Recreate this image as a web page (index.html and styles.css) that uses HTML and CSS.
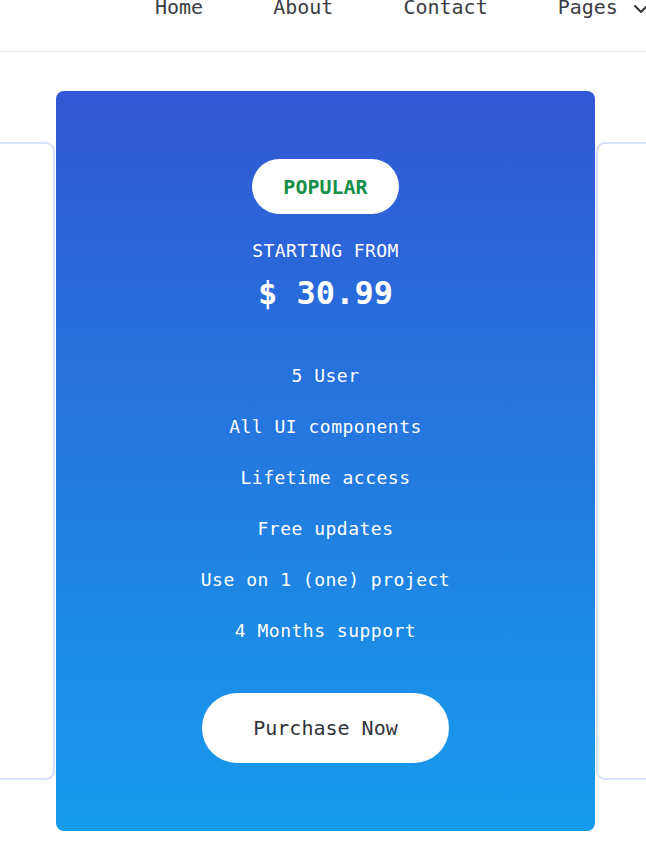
FILE: index.html
```html
<!DOCTYPE html>
<html>
<head>
<meta charset="utf-8">
<link rel="stylesheet" href="styles.css">
</head>
<body>
<header class="header">
  <nav class="nav">
    <a class="nav-link">Home</a>
    <a class="nav-link">About</a>
    <a class="nav-link">Contact</a>
    <a class="nav-link nav-drop">Pages
      <svg class="chev" width="16" height="10" viewBox="0 0 16 10"><path d="M2 2 L8 8 L14 2" fill="none" stroke="#333" stroke-width="2" stroke-linecap="round" stroke-linejoin="round"/></svg>
    </a>
  </nav>
</header>
<section class="pricing">
  <div class="side-card"></div>
  <div class="card">
    <div class="badge">POPULAR</div>
    <div class="from">STARTING FROM</div>
    <div class="price">$ 30.99</div>
    <ul class="features">
      <li>5 User</li>
      <li>All UI components</li>
      <li>Lifetime access</li>
      <li>Free updates</li>
      <li>Use on 1 (one) project</li>
      <li>4 Months support</li>
    </ul>
    <a class="buy">Purchase Now</a>
  </div>
  <div class="side-card"></div>
</section>
</body>
</html>
```
FILE: styles.css
```css
* { box-sizing: border-box; }
html, body { margin: 0; padding: 0; }
body {
  width: 646px;
  height: 866px;
  overflow: hidden;
  background: #fff;
  font-family: "DejaVu Sans Mono", "Liberation Mono", monospace;
}
.header {
  height: 52px;
  border-bottom: 1px solid #e6e7ea;
  overflow: hidden;
}
.nav {
  display: flex;
  gap: 70px;
  padding-left: 155px;
  margin-top: -3px;
  white-space: nowrap;
}
.nav-link {
  font-size: 20px;
  line-height: 20px;
  color: #3a3d44;
  display: flex;
  align-items: center;
}
.nav-drop .chev { margin-left: 15px; margin-top: 3px; flex-shrink: 0; }
.pricing {
  display: flex;
  justify-content: center;
  align-items: center;
  gap: 1px;
  padding-left: 5px;
  margin-top: 39px;
}
.side-card {
  flex-shrink: 0;
  width: 400px;
  height: 638px;
  border: 2px solid #d6dffb;
  border-radius: 9px;
  background: #fff;
}
.card {
  flex-shrink: 0;
  width: 539px;
  height: 740px;
  border-radius: 8px;
  background: linear-gradient(180deg, #3157d4 0%, #169cec 100%);
  padding: 68px 0;
  display: flex;
  flex-direction: column;
  align-items: center;
  color: #fff;
}
.badge {
  width: 147px;
  height: 55px;
  line-height: 57px;
  border-radius: 28px;
  background: #fff;
  color: #178e49;
  font-weight: bold;
  font-size: 20px;
  text-align: center;
}
.from {
  margin-top: 23px;
  font-size: 18px;
  line-height: 28px;
  letter-spacing: 0.45px;
}
.price {
  margin-top: 8px;
  font-size: 32px;
  line-height: 40px;
  font-weight: bold;
}
.features {
  list-style: none;
  margin: 49px 0 0;
  padding: 0;
  display: flex;
  flex-direction: column;
  align-items: center;
  gap: 23px;
}
.features li {
  font-size: 18px;
  line-height: 28px;
  letter-spacing: 0.5px;
}
.buy {
  margin-top: 48px;
  width: 247px;
  height: 70px;
  border-radius: 35px;
  background: #fff;
  color: #2f333b;
  font-size: 20px;
  line-height: 70px;
  text-align: center;
}
```
